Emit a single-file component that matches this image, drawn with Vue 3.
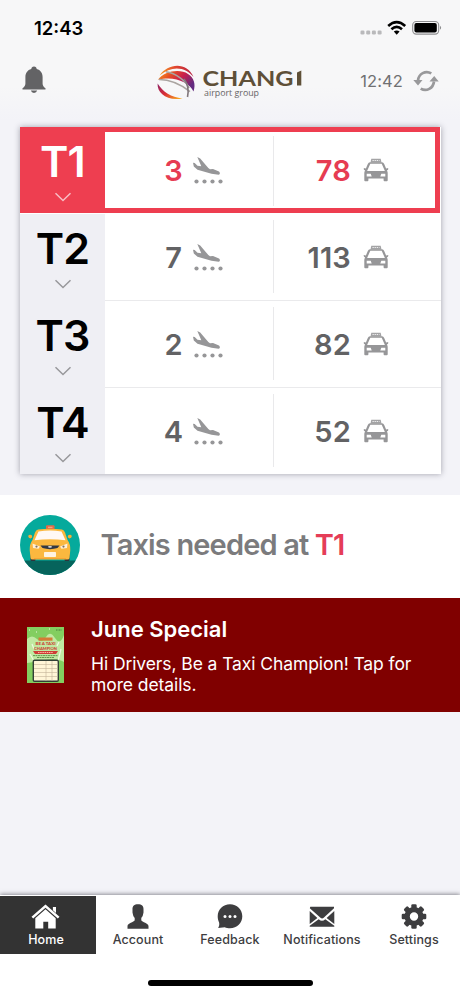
<script setup>
const rows = [
  { name: 'T1', flights: 3, taxis: 78, active: true },
  { name: 'T2', flights: 7, taxis: 113 },
  { name: 'T3', flights: 2, taxis: 82 },
  { name: 'T4', flights: 4, taxis: 52 },
]
const tabs = ['Home', 'Account', 'Feedback', 'Notifications', 'Settings']
const teeth = [0, 45, 90, 135, 180, 225, 270, 315]
</script>

<template>
  <div class="screen">
    <div class="status">
      <span class="clock">12:43</span>
      <svg class="signals" width="84" height="18" viewBox="0 0 84 18">
        <g fill="#b9b9bb">
          <rect x="1.5" y="11.5" width="4" height="4" rx="1.3" /><rect x="7.2" y="11.5" width="4" height="4" rx="1.3" />
          <rect x="12.9" y="11.5" width="4" height="4" rx="1.3" /><rect x="18.6" y="11.5" width="4" height="4" rx="1.3" />
        </g>
        <g fill="none" stroke="#000" stroke-width="2.600">
          <path d="M29.200 7 Q37.700 -.7 46.200 7" /><path d="M32.400 10.300 Q37.700 5.500 43 10.300" />
        </g>
        <path d="M34.800 12.600 Q37.700 10.200 40.600 12.600 L37.700 15.700Z" />
        <rect x="53.700" y="2.500" width="26" height="12.600" rx="3.600" fill="none" stroke="#8e8e90" stroke-width="1.100" />
        <rect x="55.400" y="4.100" width="22.400" height="9.400" rx="2" />
        <path d="M81 6.800q2.300 2 0 4z" fill="#8e8e90" />
      </svg>
    </div>

    <header class="top">
      <svg class="bell" width="24" height="28" viewBox="0 0 24 28" fill="#636365">
        <path d="M12 .5c1.700 0 2.600 1 2.700 2.500C18.500 4 20.600 7 20.600 11v6.500c0 2 .8 3.200 2.900 4.800v1.100H.5v-1.100c2.100-1.600 2.900-2.800 2.900-4.800V11c0-4 2.100-7 5.900-8C9.400 1.500 10.300.5 12 .5z" />
        <path d="M8.800 24.600h6.400q-.8 2.300-3.200 2.300t-3.200-2.300z" />
      </svg>
      <svg class="logo" width="150" height="38" viewBox="0 0 150 38">
        <defs>
          <linearGradient id="arc" x1="0" x2="1" y1="0" y2="0">
            <stop offset="0" stop-color="#f6a126" /><stop offset=".45" stop-color="#e2472f" /><stop offset="1" stop-color="#b62144" />
          </linearGradient>
          <linearGradient id="band" x1="0" x2="1" y1="0" y2=".5">
            <stop offset="0" stop-color="#f8a020" /><stop offset=".35" stop-color="#e64c24" /><stop offset=".65" stop-color="#c81e4d" /><stop offset="1" stop-color="#642b80" />
          </linearGradient>
          <linearGradient id="low" x1="0" x2="1" y1="0" y2=".8">
            <stop offset="0" stop-color="#8b2166" /><stop offset=".5" stop-color="#d92c36" /><stop offset="1" stop-color="#f7a51e" />
          </linearGradient>
        </defs>
        <path d="M3.500 11.500C12-1 31-2.500 37.500 13C30 3 16 .8 3.500 11.500z" fill="url(#arc)" />
        <path d="M2 15.800C8 7 24 4.500 32 10C38 14 40 20 37.500 27.500C33 18 18 11.500 2 15.800z" fill="url(#band)" />
        <path d="M1.600 19.500C1 29 11 37.500 26.500 34.500C15 33.200 7 28 1.600 19.500z" fill="url(#low)" />
        <path d="M3 15.600C14 15.500 24 20 34 27.600M10 7.800C20 9 31 18 33 24" fill="none" stroke="#aaa4a0" stroke-width="1.500" />
        <path d="M28 15C32 20 33 26 31.500 33" fill="none" stroke="#81777b" stroke-width="1.600" />
        <text class="brand" x="46.500" y="21.500" textLength="91" lengthAdjust="spacingAndGlyphs">CHANG</text>
        <path d="M141 8.500L145.300 6.500V21.500H141z" fill="#5f5038" />
        <text class="group" x="48" y="32.300" textLength="55" lengthAdjust="spacingAndGlyphs">airport group</text>
      </svg>
      <div class="refresh">
        <span>12:42</span>
        <svg width="26" height="22" viewBox="0 0 26 22">
          <g fill="none" stroke="#99999b" stroke-width="2.700">
            <path d="M18.300 3.400C12.500 0 5.700 3.800 5 10.500" /><path d="M7.700 18.600C13.500 22 20.300 18.200 21 11.500" />
          </g>
          <path d="M.3 10H9.500L5 15.500zM16.500 11.500h9.200L21.200 6z" fill="#99999b" />
        </svg>
      </div>
    </header>

    <main>
      <section class="board">
        <div v-for="r in rows" :key="r.name" class="row" :class="{ active: r.active }">
          <div class="terminal">
            <b>{{ r.name }}</b>
            <svg width="18" height="11" viewBox="0 0 18 11"><path d="M1.500 1.200L9 8.500L16.500 1.200" fill="none" stroke="currentColor" stroke-width="1.500" /></svg>
          </div>
          <div class="cell flights">
            <span>{{ r.flights }}</span>
            <svg width="30" height="30" viewBox="0 0 30 30" fill="#969698">
              <path d="M4.300 1L7.200 2.500L15.300 12L17 13.200L20 13L26 15.500C27.300 16.500 27.200 18.500 25.700 18.700L18.500 17.800L4.500 13.700L.8 10.500L0 6.800L1.700 7L4.500 9.800L8.300 10.300z" />
              <circle cx="3.500" cy="25.500" r="2.100" /><circle cx="11.500" cy="25.500" r="2.100" /><circle cx="19.500" cy="25.500" r="2.100" /><circle cx="27.500" cy="25.500" r="2.100" />
            </svg>
          </div>
          <div class="cell taxis">
            <span>{{ r.taxis }}</span>
            <svg width="26" height="24" viewBox="0 0 26 24">
              <path d="M8.300 .8h9.400l.8 3.600h-11z" fill="#a3a3a5" />
              <path d="M9.500 2.500h7" stroke="#eee" stroke-width="1" stroke-dasharray="1.300 .8" />
              <path fill-rule="evenodd" fill="#969698" d="M7 4.300h12q1.500 0 2.200 1.700l1.900 4.400 2.100-.5q.5 2.300-1.300 2.500.8 1 .8 2.500V22.300q0 .9-.9 .9h-2.300q-.9 0-.9-.9v-1.700H5.400V22.300q0 .9-.9 .9H2.200q-.9 0-.9-.9v-7.400q0-1.500 .8-2.500Q.3 12.200 .8 9.900l2.100.5L4.800 6Q5.500 4.300 7 4.300zM7.300 5.800L4.100 13h17.800L18.700 5.800zM3.700 15.800v2.700h5l-1-2.700zM22.300 15.800v2.700h-5l1-2.700z" />
            </svg>
          </div>
        </div>
      </section>

      <section class="needed">
        <svg width="60" height="60" viewBox="0 0 60 60">
          <defs><clipPath id="disc"><circle cx="30" cy="30" r="30" /></clipPath></defs>
          <g clip-path="url(#disc)">
            <rect width="60" height="60" fill="#05aa9c" /><rect y="45.500" width="60" height="15" fill="#06645c" />
            <rect x="10.500" y="39" width="5" height="7" rx="1" fill="#30343b" /><rect x="44.500" y="39" width="5" height="7" rx="1" fill="#30343b" />
            <rect x="26" y="10.300" width="8.500" height="4.500" rx="1" fill="#e36a45" />
            <path d="M28 12.300h4.500" stroke="#f6c6a3" stroke-width=".8" />
            <path d="M18 14.600Q30 12.800 42 14.600Q44 15 45 17.500L47.500 25Q50.500 29 50.300 35L49.500 43Q49.300 44.500 47.500 44.500H12.500Q10.700 44.500 10.500 43L9.700 35Q9.500 29 12.500 25L15 17.500Q16 15 18 14.600z" fill="#fbb83f" />
            <path d="M18.500 16.500Q30 14.500 41.500 16.500L45.500 25.200Q30 23.200 14.500 25.200z" fill="#fff8f4" />
            <path d="M8.200 21.300q0-1.700 2-1.500 2.500.3 1.800 2.700l-1.400 1q-2.300-.3-2.400-2.200zM51.800 21.300q0-1.700-2-1.500-2.500.3-1.800 2.700l1.400 1q2.300-.3 2.400-2.200z" fill="#f8ad35" />
            <path d="M12.500 28.500L20 31.500L18.500 33.800L13 33zM47.500 28.500L40 31.500L41.500 33.800L47 33z" fill="#fff0d7" />
            <circle cx="16.500" cy="31.600" r="1.100" fill="#817360" /><circle cx="43.500" cy="31.600" r="1.100" fill="#817360" />
            <path d="M20.500 30.500H39.500L37.500 33Q30 35.300 22.500 33z" fill="#313844" />
            <ellipse cx="30" cy="31.800" rx="2" ry=".9" fill="#dfe3e3" />
            <rect x="24" y="37" width="12" height="5" rx=".7" fill="#fff3e0" /><path d="M14 43.600H46" stroke="#f49a31" stroke-width=".8" />
          </g>
        </svg>
        <p>Taxis needed at <em>T1</em></p>
      </section>

      <section class="promo">
        <svg width="37" height="56" viewBox="0 0 37 56">
          <rect width="37" height="56" fill="#83ce60" />
          <path d="M0 12Q5 7 10 12T19 10T28 11T37 8V35Q30 31 18 33T0 36z" fill="#c0e9a2" />
          <path d="M2 3h1m6 2h1m12-3h1M3 27l4 7M34 22l-3 12M5 17l2 5M32 15l-2 4" stroke="#eefadf" stroke-width="1.200" />
          <path d="M29 3h6" stroke="#477c3a" stroke-dasharray="1 .5" />
          <rect x="11.500" y="10.500" width="14" height="3.200" fill="#d47b36" />
          <text class="poster" x="18.500" y="18.300" textLength="20" lengthAdjust="spacingAndGlyphs">BE A TAXI</text>
          <text class="poster" x="18.500" y="22.700" textLength="23" lengthAdjust="spacingAndGlyphs">CHAMPION</text>
          <path d="M6 24h25l-2 3H8z" fill="#cd3d36" /><path d="M11 25.500h15" stroke="#ffb6a1" stroke-dasharray="1.500 .7" />
          <path d="M6 28.600h25M10 30.500h17" stroke="#598c44" stroke-width=".9" stroke-dasharray="2 .5" />
          <rect x="6.300" y="33.300" width="25" height="21" rx="1.200" fill="#fff5d7" stroke="#324037" stroke-width="1.400" />
          <path d="M7 37.500h23.500M7 41.500h23.500M7 45.500h23.500M7 49.500h23.500M19 34v20M25 34v20" stroke="#c4b498" stroke-width=".6" />
        </svg>
        <div><h2>June Special</h2><p>Hi Drivers, Be a Taxi Champion! Tap for<br>more details.</p></div>
      </section>
    </main>

    <nav>
      <div v-for="(t, i) in tabs" :key="t" class="tab" :class="{ current: i === 0 }">
        <svg width="30" height="28" viewBox="0 0 30 28" fill="currentColor">
          <g v-if="i === 0"><path d="M14.500 1.500L28.500 13.700L26.800 15.500L14.500 4.700L2.200 15.500L.500 13.700zM21.900 4h3.100v6l-3.100-2.700z" /><path d="M14.500 6.300L24.700 15.200V25.500H17.200V18.700h-4.900V25.500H4.300V15.200z" /></g>
          <path v-else-if="i === 1" d="M15 1.200c3.700 0 5.700 1.700 5.500 5.200v3l-.7 3.200c-.5 1.400-1.200 1.800-1.500 2.400v2.300c.8 2.200 7.200 2.500 7.200 6V25.700h-21v-2.400c0-3.500 6.400-3.800 7.200-6v-2.300c-.3-.6-1-1-1.500-2.400L9.500 9.400v-3C9.300 2.900 11.300 1.200 15 1.200z" />
          <g v-else-if="i === 2"><path d="M15 1.300c7 0 12.300 5.100 12.300 11.900S22 25.200 15 25.200c-2 0-3.800-.3-5.200-1L3.100 25c1-1.600 1.500-3.500 1-5.500-.9-1.900-1.400-4-1.400-6.300C2.700 6.400 8 1.300 15 1.300z" /><g fill="#fff"><circle cx="10" cy="13.500" r="1.500" /><circle cx="15" cy="13.500" r="1.500" /><circle cx="20" cy="13.500" r="1.500" /></g></g>
          <g v-else-if="i === 3"><path d="M3.300 3.700h23.700L27 5.300L16.700 14.700q-1.600 1.400-3.200 0L2.800 5.300zM2.700 8l7.700 7-7.700 6zM27.300 8l-7.700 7 7.700 6zM11.700 16.200q3.300 3 6.600 0l9 6.600v1H2.700v-1z" /></g>
          <g v-else><rect v-for="a in teeth" :key="a" x="12.300" y="1.200" width="5.400" height="7" rx="1.300" :transform="`rotate(${a} 15 13.500)`" /><path fill-rule="evenodd" d="M15 4a9.500 9.500 0 1 0 0 19 9.500 9.500 0 1 0 0-19zM15 9.300a4.200 4.200 0 1 1 0 8.400 4.200 4.200 0 1 1 0-8.400z" /></g>
        </svg>
        <span>{{ t }}</span>
      </div>
    </nav>
    <div class="home-bar"><i></i></div>
  </div>
</template>

<style>
body { margin: 0; }
</style>
<style scoped>
* { box-sizing: border-box; }
svg { display: block; flex: none; }
p, h2 { margin: 0; }
.screen { width: 460px; height: 996px; display: flex; flex-direction: column; background: #f3f3f8; font-family: Inter, "Liberation Sans", sans-serif; overflow: hidden; }
.status { height: 56px; padding: 18px 17px 0 34px; display: flex; justify-content: space-between; background: #f7f7f8; }
.clock { font-size: 18.500px; line-height: 20px; font-weight: 600; letter-spacing: 0; }
.signals { margin-top: 1px; }
.top { height: 71px; padding: 7px 21px 0 22px; display: flex; align-items: flex-start; background: linear-gradient(#f7f7f8 30px, #f3f3f8 64px); }
.bell { margin-top: 3px; }
.logo { margin-left: 110px; margin-top: 1px; }
.brand { font: 700 21.500px Lato, sans-serif; fill: #5f5038; }
.group { font: 9.500px/1 "Open Sans", sans-serif; fill: #676565; }
.refresh { margin-left: auto; display: flex; align-items: center; gap: 10px; padding-top: 7px; font-size: 16.500px; line-height: 22px; color: #707072; letter-spacing: .1px; }
main { flex: 1; }
.board { width: 421px; height: 347px; margin-left: 20px; box-shadow: 0 0 6px rgba(40,40,60,.4); background: #fff; }
.row { height: 87px; display: flex; }
.row:last-child { height: 86px; }
.terminal { flex: none; width: 85px; background: #efeff4; display: flex; flex-direction: column; align-items: center; padding-top: 12px; color: #98989b; }
.terminal b { font-size: 43px; line-height: 44px; font-weight: 600; color: #000; letter-spacing: -.8px; }
.terminal svg { margin-top: 9px; }
.cell { flex: none; display: flex; border-bottom: 1px solid #eaeaec; font-size: 29px; line-height: 32px; font-weight: 600; color: #626264; padding-top: 28px; }
.row:last-child .cell { border: 0; }
.flights { width: 169px; padding-left: 60px; background: linear-gradient(#e9e9eb, #e9e9eb) right 6px / 1px 73px no-repeat; }
.flights span { width: 17px; display: flex; justify-content: center; }
.flights svg { margin: 1px 0 0 11px; }
.taxis { width: 167px; }
.taxis span { width: 77px; text-align: right; letter-spacing: .2px; }
.taxis svg { margin: 3px 0 0 12px; }
.active { width: 420px; border: 5px solid #ee3e50; border-left: 0; height: 86px; margin-bottom: 1px; }
.active .terminal { margin: -5px 0; background: #ee3e50; color: #f8bdc4; }
.active .terminal b { color: #fff; }
.active .cell { padding-top: 23px; color: #e63c52; border: 0; }
.active .flights { background-position: right 4px; background-size: 1px 70px; }
.active .taxis { width: 161px; }
.needed { height: 103px; margin-top: 21px; background: #fff; display: flex; align-items: center; padding: 0 0 3px 20px; }
.needed svg { margin-bottom: 1px; }
.needed p { margin-left: 20.500px; font-size: 29px; line-height: 34px; font-weight: 600; color: #7b7b7d; letter-spacing: -.85px; }
.needed em { font-style: normal; color: #e53d57; }
.promo { height: 114px; background: #800000; padding: 0 20px 0 27px; display: flex; color: #fff; }
.promo svg { margin-top: 29px; }
.promo div { margin-left: 27px; padding-top: 17.500px; }
.poster { font: 900 4.200px Lato, sans-serif; fill: #cc4335; text-anchor: middle; }
.promo h2 { font-size: 22px; line-height: 26px; font-weight: 600; }
.promo p { margin-top: 11px; font-size: 17.500px; line-height: 21.500px; white-space: nowrap; letter-spacing: -.09px; }
nav { height: 59px; display: flex; background: #fff; box-shadow: 0 -1px 4px rgba(40,40,50,.5); }
.tab { width: 92px; display: flex; flex-direction: column; align-items: center; color: #3d3d3f; padding-top: 8px; }
.current { width: 96px; padding-right: 4px; margin: 1px 0 0; padding-top: 7px; background: #333; color: #fff; }
.tab:nth-child(2) { margin-left: -4px; }
.tab span { font-size: 12.500px; line-height: 15px; margin-top: 1px; font-weight: 500; letter-spacing: .1px; }
.home-bar { height: 42px; background: #fff; display: flex; justify-content: center; padding-top: 26px; }
.home-bar i { width: 165px; height: 6px; border-radius: 3px; background: #000; }
</style>
